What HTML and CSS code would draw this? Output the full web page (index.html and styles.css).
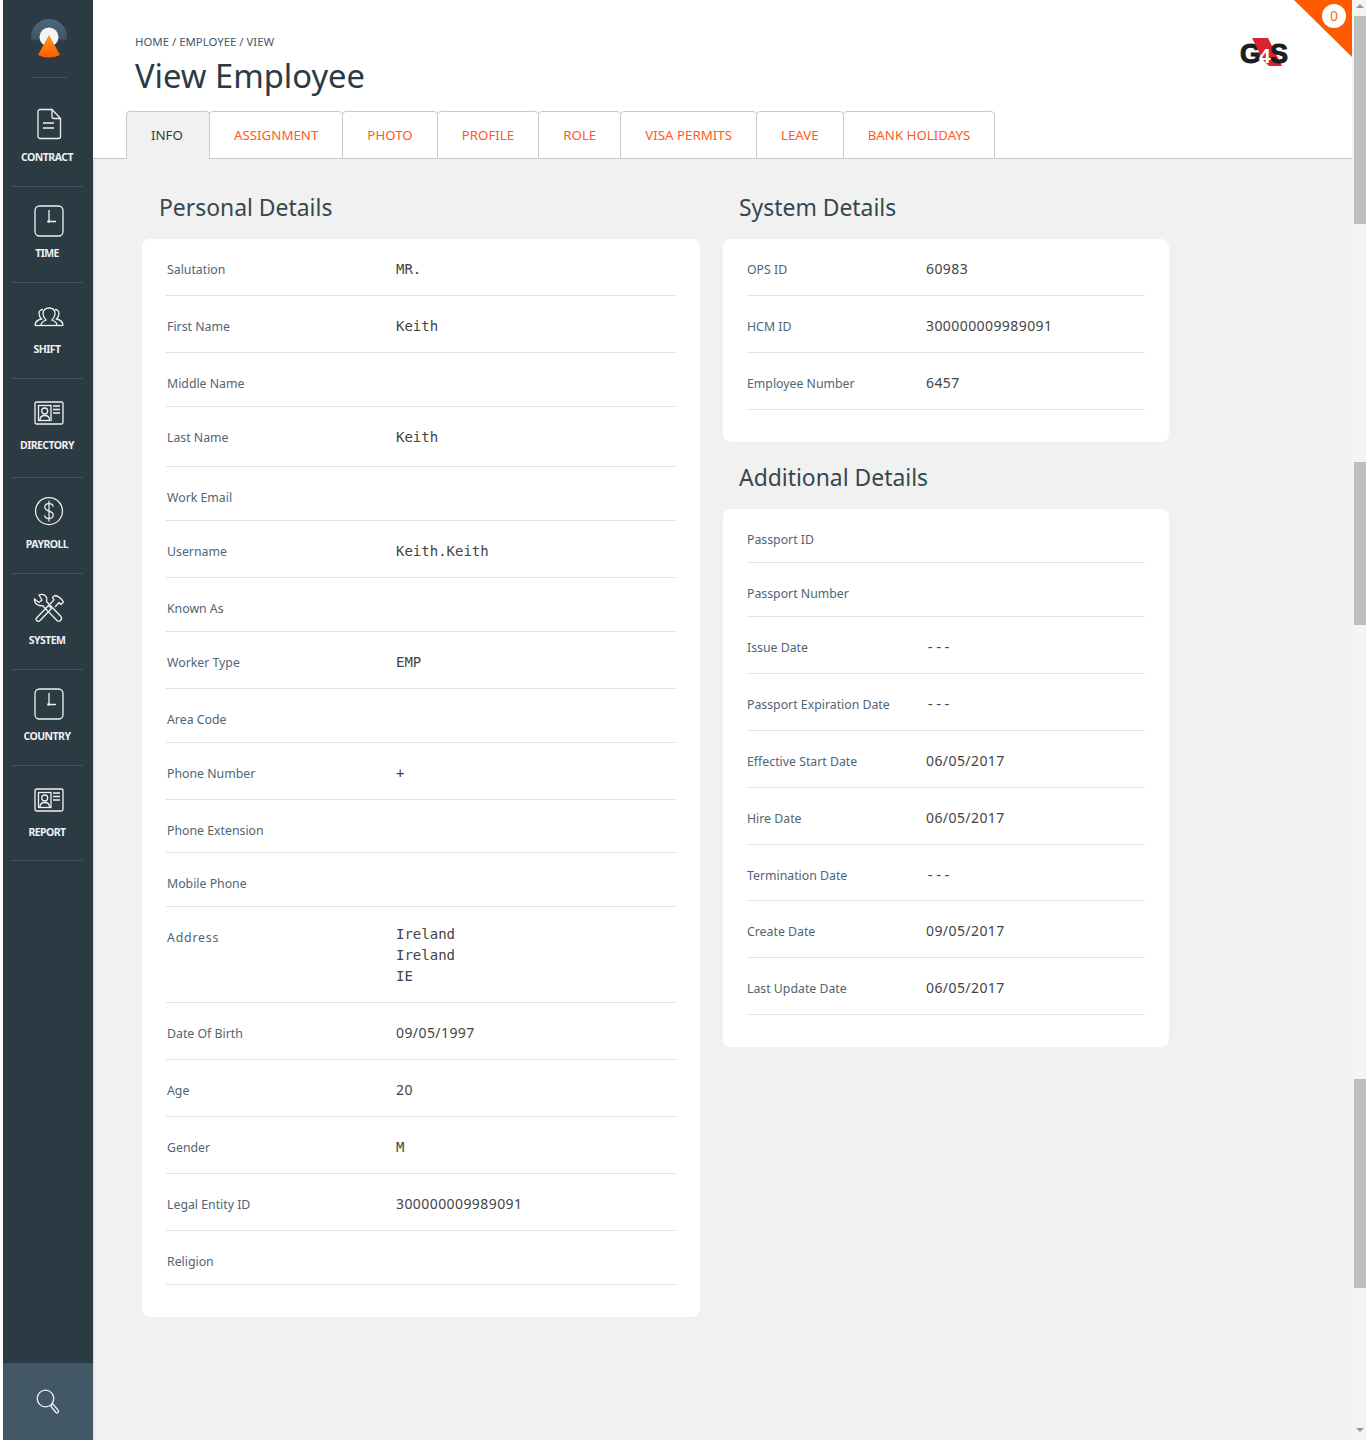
FILE: index.html
```html
<!DOCTYPE html>
<html lang="en">
<head>
  <meta charset="UTF-8" />
  <title>View Employee</title>
  <link rel="stylesheet" href="styles.css">
</head>
<body>
  <div class="strip"></div>

  <!-- Sidebar -->
  <nav class="sidebar">
    <div class="brand">
      <svg width="40" height="44" viewBox="0 0 40 44">
        <defs>
          <linearGradient id="ball" x1="0" y1="0" x2="0" y2="1">
            <stop offset="0" stop-color="#4d6a7c"/>
            <stop offset="0.55" stop-color="#3d5564"/>
            <stop offset="0.6" stop-color="#2f3e48"/>
            <stop offset="1" stop-color="#2b3942"/>
          </linearGradient>
          <linearGradient id="cone" x1="0" y1="0" x2="0" y2="1">
            <stop offset="0" stop-color="#ff9a1e"/>
            <stop offset="1" stop-color="#ff5a00"/>
          </linearGradient>
        </defs>
        <circle cx="20" cy="20" r="18" fill="url(#ball)"/>
        <circle cx="20" cy="20" r="9.5" fill="#f4f4f4"/>
        <path d="M20 18 L31 38 Q20 43 9 38 Z" fill="url(#cone)"/>
      </svg>
    </div>

    <a class="nav-item nav-first">
      <svg width="26" height="32" viewBox="0 0 26 32" class="ico">
        <path d="M4 1.5H16L24.5 10.5V28.5A2 2 0 0 1 22.5 30.5H4A2 2 0 0 1 2 28.5V3.5A2 2 0 0 1 4 1.5Z"/>
        <path d="M16 1.5V8.5A2 2 0 0 0 18 10.5H24.5"/>
        <path d="M7 15H18M7 20H18"/>
      </svg>
      <span>CONTRACT</span>
    </a>
    <a class="nav-item">
      <svg width="30" height="32" viewBox="0 0 30 32" class="ico">
        <rect x="1" y="1" width="28" height="30" rx="4.5"/>
        <path d="M15 5V16.5H22"/>
        <circle cx="14.5" cy="16.5" r="1.3" class="dot"/>
      </svg>
      <span>TIME</span>
    </a>
    <a class="nav-item">
      <svg width="30" height="20" viewBox="0 0 30 20" class="ico">
        <path d="M1 18.5C1 14.5 3 13 7.5 12C6 10.5 5 8.5 5 6.5C5 4 7 2.5 9 2.5"/>
        <path d="M29 18.5C29 14.5 27 13 22.5 12C24 10.5 25 8.5 25 6.5C25 4 23 2.5 21 2.5"/>
        <path d="M7 18.5C7 15 9.5 14 12 13C10 11 9 9 9 6.5C9 3 11.5 1 15 1C18.5 1 21 3 21 6.5C21 9 20 11 18 13C20.5 14 23 15 23 18.5"/>
        <path d="M1 18.5H29"/>
      </svg>
      <span>SHIFT</span>
    </a>
    <a class="nav-item nav-wide">
      <svg width="30" height="24" viewBox="0 0 30 24" class="ico">
        <rect x="1" y="1" width="28" height="22" rx="1.5"/>
        <rect x="4.5" y="4.5" width="12.5" height="15"/>
        <circle cx="10.7" cy="10" r="3"/>
        <path d="M6 19C6 15.5 8 14.5 10.7 14.5C13.4 14.5 15.5 15.5 15.5 19"/>
        <path d="M19 5H26M19 8.5H26M19 12H26"/>
      </svg>
      <span>DIRECTORY</span>
    </a>
    <a class="nav-item">
      <svg width="30" height="34" viewBox="0 1 30 34" class="ico">
        <circle cx="15" cy="17" r="14.3"/>
        <path d="M19.5 12.5C19.5 10 17.5 9 15 9C12.5 9 10.5 10.5 10.5 13C10.5 18 19.5 16 19.5 21C19.5 23.5 17.5 25 15 25C12.5 25 10.5 23.5 10.5 21.5"/>
        <path d="M15 6V28"/>
      </svg>
      <span>PAYROLL</span>
    </a>
    <a class="nav-item">
      <svg width="32" height="30" viewBox="0 0 32 30" class="ico">
        <path d="M1.5 6L6 9.5L9 7L6 2C9 0.5 12.5 1.5 13.5 4.5C14 6 14 7 13.5 8.5L28 23.5C29 25 28.5 26.5 27.5 27.5C26.5 28.5 25 28.5 24 27.5L9.5 12.5C6 13.5 1 11 1.5 6Z"/>
        <path d="M4 24.5L15.5 12.5L18.5 15.5L7 27.5C6 28.5 4.5 28.5 3.5 27.5C2.5 26.5 3 25.5 4 24.5Z"/>
        <path d="M17 11L21 7L19.5 4.5L22 2.5C25 3 28 5 30.5 9L28 11.5L26 9.5L22 14"/>
      </svg>
      <span>SYSTEM</span>
    </a>
    <a class="nav-item">
      <svg width="30" height="32" viewBox="0 0 30 32" class="ico">
        <rect x="1" y="1" width="28" height="30" rx="4.5"/>
        <path d="M15 5V16.5H22"/>
        <circle cx="14.5" cy="16.5" r="1.3" class="dot"/>
      </svg>
      <span>COUNTRY</span>
    </a>
    <a class="nav-item nav-last">
      <svg width="30" height="24" viewBox="0 0 30 24" class="ico">
        <rect x="1" y="1" width="28" height="22" rx="1.5"/>
        <rect x="4.5" y="4.5" width="12.5" height="15"/>
        <circle cx="10.7" cy="10" r="3"/>
        <path d="M6 19C6 15.5 8 14.5 10.7 14.5C13.4 14.5 15.5 15.5 15.5 19"/>
        <path d="M19 5H26M19 8.5H26M19 12H26"/>
      </svg>
      <span>REPORT</span>
    </a>

    <div class="search-box">
      <svg width="24" height="26" viewBox="0 0 24 26" class="ico">
        <circle cx="9.5" cy="9.5" r="8.3"/>
        <path d="M15.5 16L17 15L22.5 21.5C23 22.5 22.5 23 22 23.5C21.5 24 20.5 24 20 23.5L15 17.5Z"/>
      </svg>
    </div>
  </nav>

  <!-- Main -->
  <div class="main">
    <a class="alerts"><span>0</span></a>

    <header class="page-head">
      <div class="head-top">
        <div>
          <div class="crumbs">HOME / EMPLOYEE / VIEW</div>
          <h1>View Employee</h1>
        </div>
        <svg class="g4s" width="56" height="36" viewBox="0 0 56 36">
          <text x="2" y="26" class="g4s-dark">G</text>
          <path d="M14 1H30L44 29H31L25 23Z" fill="#d9232e"/>
          <text x="32" y="26" class="g4s-dark">S</text>
          <text x="21" y="26" class="g4s-white">4</text>
        </svg>
      </div>
      <ul class="tabs">
        <li class="active">INFO</li>
        <li>ASSIGNMENT</li>
        <li>PHOTO</li>
        <li>PROFILE</li>
        <li>ROLE</li>
        <li>VISA PERMITS</li>
        <li>LEAVE</li>
        <li>BANK HOLIDAYS</li>
      </ul>
    </header>

    <div class="content">
      <section class="col-left">
        <h2>Personal Details</h2>
        <div class="card">
          <div class="row"><label>Salutation</label><div class="val">MR.</div></div>
          <div class="row"><label>First Name</label><div class="val">Keith</div></div>
          <div class="row"><label>Middle Name</label></div>
          <div class="row row-tall"><label>Last Name</label><div class="val">Keith</div></div>
          <div class="row"><label>Work Email</label></div>
          <div class="row"><label>Username</label><div class="val">Keith.Keith</div></div>
          <div class="row"><label>Known As</label></div>
          <div class="row"><label>Worker Type</label><div class="val">EMP</div></div>
          <div class="row"><label>Area Code</label></div>
          <div class="row"><label>Phone Number</label><div class="val">+</div></div>
          <div class="row row-short"><label>Phone Extension</label></div>
          <div class="row"><label>Mobile Phone</label></div>
          <div class="row row-address"><label>Address</label><div class="val">Ireland<br>Ireland<br>IE</div></div>
          <div class="row"><label>Date Of Birth</label><div class="val num">09/05/1997</div></div>
          <div class="row"><label>Age</label><div class="val num">20</div></div>
          <div class="row"><label>Gender</label><div class="val">M</div></div>
          <div class="row"><label>Legal Entity ID</label><div class="val num">300000009989091</div></div>
          <div class="row"><label>Religion</label></div>
        </div>
      </section>

      <section class="col-right">
        <h2>System Details</h2>
        <div class="card">
          <div class="row"><label>OPS ID</label><div class="val num">60983</div></div>
          <div class="row"><label>HCM ID</label><div class="val num">300000009989091</div></div>
          <div class="row"><label>Employee Number</label><div class="val num">6457</div></div>
        </div>

        <h2 class="h2-next">Additional Details</h2>
        <div class="card">
          <div class="row"><label>Passport ID</label></div>
          <div class="row"><label>Passport Number</label></div>
          <div class="row"><label>Issue Date</label><div class="val">---</div></div>
          <div class="row"><label>Passport Expiration Date</label><div class="val">---</div></div>
          <div class="row"><label>Effective Start Date</label><div class="val num">06/05/2017</div></div>
          <div class="row"><label>Hire Date</label><div class="val num">06/05/2017</div></div>
          <div class="row row-short"><label>Termination Date</label><div class="val">---</div></div>
          <div class="row"><label>Create Date</label><div class="val num">09/05/2017</div></div>
          <div class="row"><label>Last Update Date</label><div class="val num">06/05/2017</div></div>
        </div>
      </section>
    </div>
  </div>

  <!-- Scrollbar -->
  <div class="scrollbar">
    <div class="arrow arrow-up"></div>
    <div class="thumb thumb-1"></div>
    <div class="thumb thumb-2"></div>
    <div class="thumb thumb-3"></div>
    <div class="arrow arrow-down"></div>
  </div>
</body>
</html>
```

FILE: styles.css
```css
* {
  box-sizing: border-box;
}

html, body {
  margin: 0;
  height: 1440px;
  overflow: hidden;
}

body {
  display: flex;
  font-family: "Noto Sans", Arial, sans-serif;
  background: #f1f1f1;
}

.strip {
  width: 3px;
  background: white;
}

/* Sidebar */
.sidebar {
  width: 90px;
  display: flex;
  flex-direction: column;
  background: #2c3a44;
  box-shadow: 1px 0 2px rgba(0, 0, 0, 0.1);
}

.brand {
  width: 36px;
  height: 78px;
  margin-left: 28px;
  padding-top: 17px;
  border-bottom: 1px solid #43525c;
}

.brand svg {
  display: block;
  margin-left: -2px;
}

.nav-item {
  height: 96px;
  margin: 0 10px 0 8px;
  padding-top: 18px;
  border-bottom: 1px solid #43525c;
  display: flex;
  flex-direction: column;
  align-items: center;
  color: #eef1f3;
  font-size: 10.5px;
  font-weight: 700;
  letter-spacing: -0.55px;
  line-height: 16px;
}

.nav-item svg {
  height: 32px;
  margin-left: 4px;
  flex: none;
}

.nav-item span {
  margin-top: 8px;
}

.nav-first {
  height: 109px;
  padding-top: 30px;
}

.nav-first span {
  margin-top: 9px;
}

.nav-wide {
  height: 99px;
}

.nav-last {
  height: 95px;
}

.ico {
  fill: none;
  stroke: #eef1f3;
  stroke-width: 1.3;
}

.ico .dot {
  fill: #eef1f3;
  stroke: none;
}

.search-box {
  margin-top: auto;
  height: 77px;
  background: #435866;
  padding: 26px 0 0 33px;
}

/* Main */
.main {
  position: relative;
  width: 1259px;
  display: flex;
  flex-direction: column;
}

.alerts {
  position: absolute;
  top: 0;
  right: 0;
  width: 58px;
  height: 57px;
  background: #ff5a00;
  clip-path: polygon(0 0, 100% 0, 100% 100%);
}

.alerts span {
  position: absolute;
  top: 4px;
  right: 6px;
  width: 24px;
  height: 24px;
  border-radius: 50%;
  background: white;
  color: #ff6a1a;
  font-size: 14px;
  line-height: 24px;
  text-align: center;
}

.page-head {
  height: 159px;
  background: white;
  border-bottom: 1px solid #c8c8c8;
  padding: 33px 0 0 33px;
}

.head-top {
  height: 78px;
  display: flex;
  justify-content: space-between;
}

.crumbs {
  margin-left: 9px;
  font-size: 11.4px;
  line-height: 18px;
  color: #43586a;
}

h1 {
  margin: 0 0 0 9px;
  font-size: 32.7px;
  font-weight: 400;
  line-height: 50px;
  color: #2c3a44;
}

.g4s {
  margin: 4px 58px 0 0;
}

.g4s-dark {
  font-family: "Liberation Sans", Arial, sans-serif;
  font-size: 27px;
  font-weight: 700;
  fill: #1d1d1f;
  stroke: #1d1d1f;
  stroke-width: 1;
}

.g4s-white {
  font-family: "Liberation Sans", Arial, sans-serif;
  font-size: 21px;
  font-weight: 700;
  fill: white;
}

.tabs {
  display: flex;
  margin: 0;
  padding: 0;
  list-style: none;
}

.tabs li {
  height: 48px;
  margin-right: -1px;
  padding: 0 24px;
  border: 1px solid #c8c8c8;
  border-radius: 4px 4px 0 0;
  background: white;
  color: #ff5a1f;
  font-size: 13.3px;
  line-height: 46px;
}

.tabs li.active {
  width: 84px;
  background: #f1f1f1;
  color: #2c3a44;
  border-bottom-color: #f1f1f1;
}

.content {
  display: flex;
  gap: 23px;
  padding-left: 49px;
}

.col-left {
  width: 558px;
}

.col-right {
  width: 446px;
}

h2 {
  margin: 0;
  height: 80px;
  padding: 31px 0 0 17px;
  font-size: 22.9px;
  font-weight: 400;
  line-height: 36px;
  color: #37474f;
}

.col-right h2 {
  padding-left: 16px;
}

.col-right .h2-next {
  height: 67px;
  padding-top: 18px;
}

.card {
  background: white;
  border-radius: 8px;
  padding: 0 24px 32px;
}

.row {
  display: flex;
  padding: 20px 0 13px;
  border-bottom: 1px solid #e2e2e2;
}

.row label {
  width: 230px;
  flex: none;
  margin: 1px 0 -1px;
  padding-left: 1px;
  font-size: 12.3px;
  line-height: 20px;
  color: #4f6575;
}

.col-right .row label {
  width: 179px;
  padding-left: 0;
}

.row-address label {
  letter-spacing: 0.8px;
}

.val {
  margin-bottom: 2px;
  font-family: "DejaVu Sans Mono", "Liberation Mono", monospace;
  font-size: 14px;
  line-height: 21px;
  color: #444;
}

.num {
  margin: -1px 0 3px;
  font-family: "Noto Sans", Arial, sans-serif;
  letter-spacing: 0.42px;
}

.row-tall {
  padding-bottom: 16px;
}

.row-short {
  padding-bottom: 12px;
}

.row-address .val {
  margin: -3px 0 2px;
}

/* Scrollbar */
.scrollbar {
  width: 14px;
  padding-left: 2px;
  display: flex;
  flex-direction: column;
  background: #f4f4f4;
}

.arrow {
  width: 0;
  height: 0;
  margin-left: 2px;
  border-left: 4px solid transparent;
  border-right: 4px solid transparent;
}

.arrow-up {
  margin-top: 4px;
  margin-bottom: 8px;
  border-bottom: 4px solid #9a9a9a;
}

.arrow-down {
  margin-top: auto;
  margin-bottom: 8px;
  border-top: 4px solid #9a9a9a;
}

.thumb {
  background: #bfbfbf;
}

.thumb-1 {
  height: 208px;
}

.thumb-2 {
  height: 163px;
  margin-top: 238px;
}

.thumb-3 {
  height: 209px;
  margin-top: 454px;
}
```
